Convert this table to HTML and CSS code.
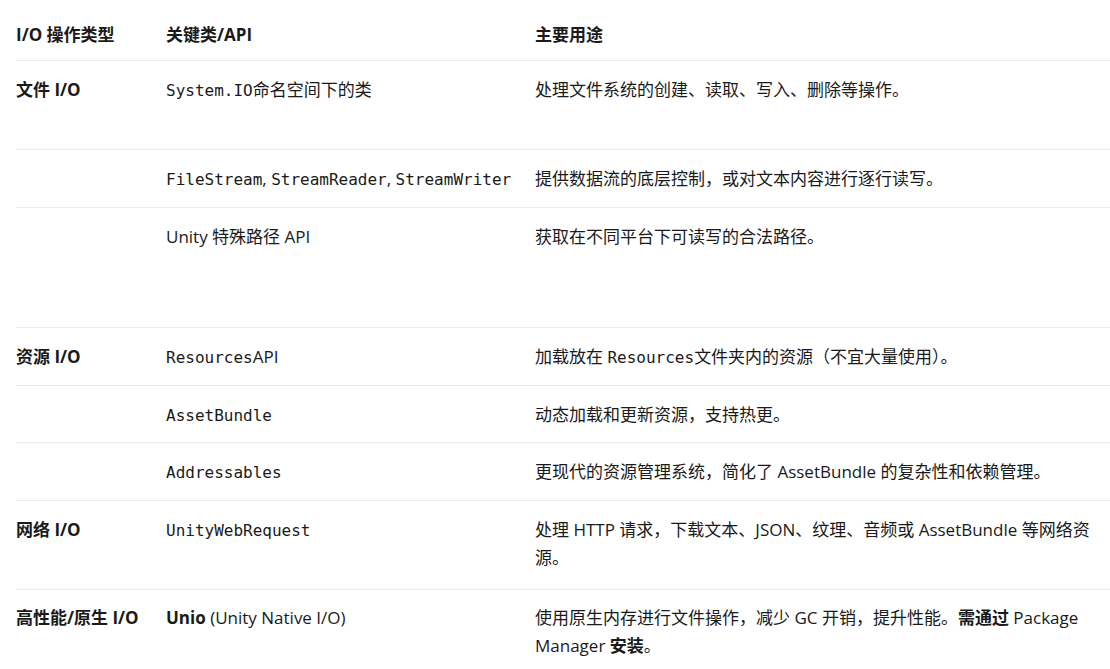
FILE: index.html
```html
<!DOCTYPE html>
<html lang="zh-CN">
<head>
<meta charset="utf-8">
<title>Unity I/O</title>
<link rel="stylesheet" href="styles.css">
</head>
<body>
<table class="io-table">
  <colgroup>
    <col class="c1"><col class="c2"><col class="c3">
  </colgroup>
  <thead>
    <tr><th>I/O 操作类型</th><th>关键类/API</th><th>主要用途</th></tr>
  </thead>
  <tbody>
    <tr class="tall1">
      <td><strong>文件</strong> I/O</td>
      <td><code>System.IO</code>命名空间下的类</td>
      <td>处理文件系统的创建、读取、写入、删除等操作。</td>
    </tr>
    <tr>
      <td></td>
      <td><code>FileStream</code>, <code>StreamReader</code>, <code>StreamWriter</code></td>
      <td>提供数据流的底层控制，或对文本内容进行逐行读写。</td>
    </tr>
    <tr class="tall2">
      <td></td>
      <td>Unity 特殊路径 API</td>
      <td>获取在不同平台下可读写的合法路径。</td>
    </tr>
    <tr>
      <td><strong>资源</strong> I/O</td>
      <td><code>Resources</code>API</td>
      <td>加载放在 <code>Resources</code>文件夹内的资源（不宜大量使用）。</td>
    </tr>
    <tr class="short">
      <td></td>
      <td><code>AssetBundle</code></td>
      <td>动态加载和更新资源，支持热更。</td>
    </tr>
    <tr>
      <td></td>
      <td><code>Addressables</code></td>
      <td>更现代的资源管理系统，简化了 AssetBundle 的复杂性和依赖管理。</td>
    </tr>
    <tr class="two">
      <td><strong>网络</strong> I/O</td>
      <td><code>UnityWebRequest</code></td>
      <td>处理 HTTP 请求，下载文本、JSON、纹理、音频或 AssetBundle 等网络资源。</td>
    </tr>
    <tr class="last">
      <td><strong>高性能/原生</strong> I/O</td>
      <td><strong>Unio</strong> (Unity Native I/O)</td>
      <td>使用原生内存进行文件操作，减少 GC 开销，提升性能。<strong>需通过</strong> Package Manager <strong>安装</strong>。</td>
    </tr>
  </tbody>
</table>
</body>
</html>
```

FILE: styles.css
```css
html, body {
  margin: 0;
  padding: 0;
  background: #ffffff;
  overflow: hidden;
}

body {
  font-family: "Open Sans", "Noto Sans CJK SC", sans-serif;
  font-size: 17px;
  color: #1a1a1a;
}

.io-table {
  margin-left: 16px;
  width: 1110px;
  border-collapse: collapse;
  table-layout: fixed;
}

.c1 { width: 150px; }
.c2 { width: 369px; }

.io-table th {
  text-align: left;
  font-weight: 700;
  line-height: 28px;
  padding: 21px 0 11px;
  border-bottom: 1px solid #ebebeb;
}

.io-table td {
  vertical-align: top;
  line-height: 28px;
  padding: 15px 16px 14px 0;
  border-bottom: 1px solid #ebebeb;
}

.io-table td:first-child {
  font-weight: 700;
}

.io-table tr.tall1 td { padding-bottom: 45px; }
.io-table tr.tall2 td { padding-bottom: 76px; }
.io-table tr.short td { padding-bottom: 13px; }
.io-table tr.two td { padding-bottom: 17px; }
.io-table tr.last td { padding-top: 14px; border-bottom: none; }

code {
  font-family: "DejaVu Sans Mono", "Liberation Mono", monospace;
  font-size: 16px;
  line-height: 1;
}

strong { font-weight: 700; }
```
